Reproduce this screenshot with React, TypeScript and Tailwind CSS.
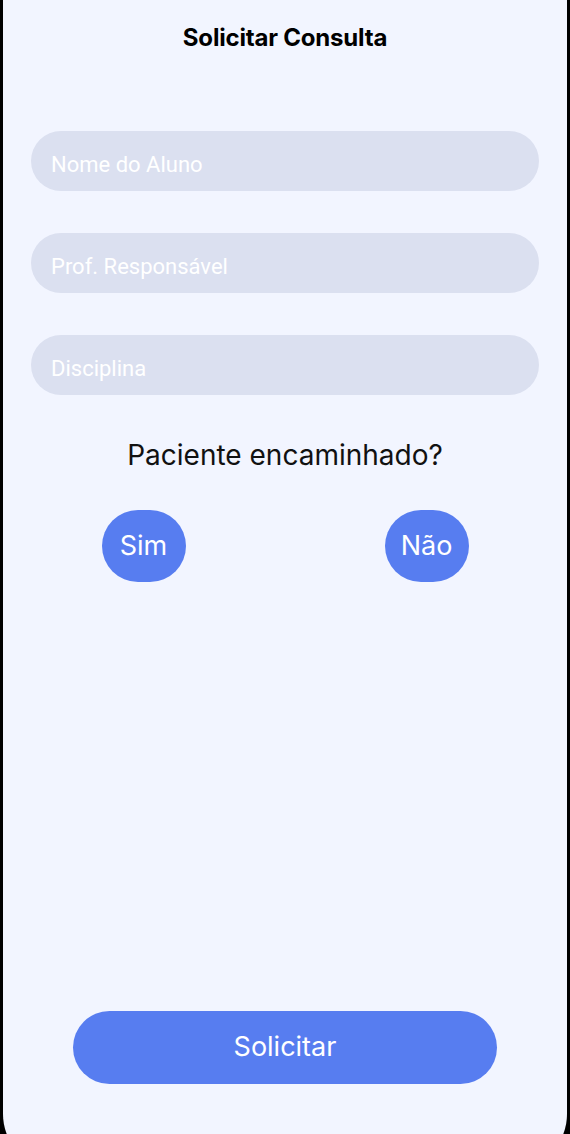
import React, { useState } from 'react';

const fields = ['Nome do Aluno', 'Prof. Responsável', 'Disciplina'];

const App: React.FC = () => {
  const [values, setValues] = useState<string[]>(['', '', '']);
  const [referred, setReferred] = useState<boolean | null>(null);

  return (
    <div className="h-[1134px] overflow-hidden bg-black px-[3px]">
      <div className="-mt-[60px] flex h-[1230px] flex-col rounded-[56px] bg-[#f2f5ff] pt-[60px] font-['Inter',sans-serif]">
        {/* Header */}
        <h1 className="mt-[22px] text-center text-[24px] font-bold leading-[32px] tracking-[-0.2px] text-black">
          Solicitar Consulta
        </h1>

        {/* Form */}
        <div className="mt-[77px] flex flex-col gap-[42px] px-[28px]">
          {fields.map((label, i) => (
            <input
              key={label}
              value={values[i]}
              onChange={(e) => {
                const next = [...values];
                next[i] = e.target.value;
                setValues(next);
              }}
              placeholder={label}
              className="block h-[60px] w-full rounded-full bg-[#dbe0f0] px-[20px] pt-[6px] font-['Roboto',sans-serif] text-[22px] text-gray-700 outline-none placeholder:text-white"
            />
          ))}
        </div>

        <p className="mt-[42px] text-center text-[28px] leading-[36px] text-[#111]">
          Paciente encaminhado?
        </p>

        <div className="mx-auto mt-[37px] flex w-[367px] justify-between">
          <button
            type="button"
            onClick={() => setReferred(true)}
            className="flex h-[72px] w-[84px] items-center justify-center rounded-[36px] bg-[#577df0] text-[27px] text-white"
          >
            Sim
          </button>
          <button
            type="button"
            onClick={() => setReferred(false)}
            className="flex h-[72px] w-[84px] items-center justify-center rounded-[36px] bg-[#577df0] text-[27px] text-white"
          >
            Não
          </button>
        </div>

        <div className="flex-1" />

        {/* Submit */}
        <button
          type="button"
          data-referred={referred === null ? '' : String(referred)}
          className="mx-auto mb-[86px] flex h-[73px] w-[424px] items-center justify-center rounded-full bg-[#577df0] text-[27px] text-white"
        >
          Solicitar
        </button>
      </div>
    </div>
  );
};

export default App;
